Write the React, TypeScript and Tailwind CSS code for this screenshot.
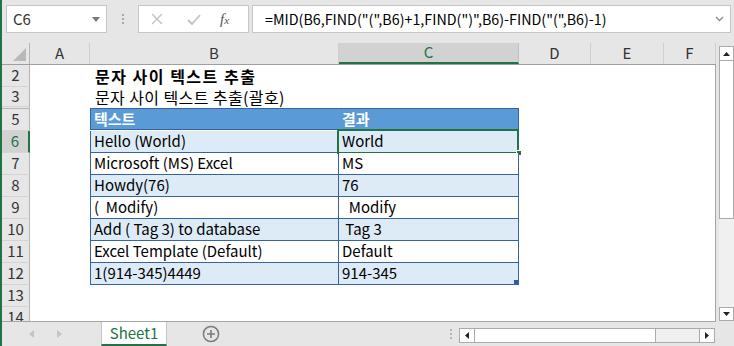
import type { ReactNode } from 'react'

const FONT = { fontFamily: '"Noto Sans CJK KR", "Noto Sans", sans-serif' }

const COLS = [
  { key: 'A', w: 'w-[60px]' },
  { key: 'B', w: 'w-[249px]' },
  { key: 'C', w: 'w-[180px]' },
  { key: 'D', w: 'w-[72px]' },
  { key: 'E', w: 'w-[73px]' },
  { key: 'F', w: 'w-[52px]' },
]

const DATA = [
  ['Hello (World)', 'World'],
  ['Microsoft (MS) Excel', 'MS'],
  ['Howdy(76)', '76'],
  ['(  Modify)', '  Modify'],
  ['Add ( Tag 3) to database', ' Tag 3'],
  ['Excel Template (Default)', 'Default'],
  ['1(914-345)4449', '914-345'],
]

function RowHead({ n, h, active }: { n: string; h: string; active?: boolean }) {
  return (
    <div
      className={`w-[28px] shrink-0 ${h} flex items-center justify-center text-[15px] border-b border-[#d4d4d4] ${
        active ? 'bg-[#d2d2d2] text-[#217346] border-r-2 border-r-[#217346]' : 'bg-[#e6e6e6] text-[#333] border-r border-r-[#b5b5b5]'
      }`}
    >
      {n}
    </div>
  )
}

function Row({ n, h = 'h-[22px]', active, children }: { n: string; h?: string; active?: boolean; children?: ReactNode }) {
  return (
    <div className={`flex shrink-0 ${h}`}>
      <RowHead n={n} h={h} active={active} />
      <div className="w-[60px] shrink-0" />
      {children ?? <div className="flex-1" />}
    </div>
  )
}

function TableRow({ b, c, band, active, last }: { b: string; c: string; band: boolean; active?: boolean; last?: boolean }) {
  const bg = band ? 'bg-[#ddebf7]' : 'bg-white'
  return (
    <>
      <div className={`w-[249px] h-[22px] shrink-0 ${bg} border-l border-r border-b border-[#3763a6] pl-[3px] flex items-center text-[15px] text-black whitespace-pre`}>
        {b}
      </div>
      <div className={`relative w-[180px] h-[22px] shrink-0 ${bg} border-r border-b border-[#3763a6] pl-[3px] flex items-center text-[15px] text-black whitespace-pre`}>
        {c}
        {active && (
          <>
            <div className="absolute -left-[2px] -top-[2px] w-[182px] h-[25px] border-2 border-[#217346]" />
            <div className="absolute -right-[4px] -bottom-[4px] w-[6px] h-[6px] bg-[#217346] border border-white" />
          </>
        )}
        {last && <div className="absolute right-0 bottom-0 w-[4px] h-[4px] bg-[#3555a8]" />}
      </div>
    </>
  )
}

export default function App() {
  return (
    <div className="w-[734px] h-[346px] overflow-hidden bg-[#e6e6e6] border-l-2 border-[#217346] flex flex-col text-[#333]" style={FONT}>
      {/* formula bar */}
      <div className="h-[43px] shrink-0 flex items-start pt-[5px]">
        <div className="ml-[4px] w-[101px] h-[28px] bg-white border border-[#c6c6c6] flex items-center pl-[6px] pr-[6px] text-[15px]">
          <span className="flex-1">C6</span>
          <svg width="8" height="5" viewBox="0 0 8 5"><path d="M0 0h8L4 5z" fill="#7a7a7a" /></svg>
        </div>
        <div className="w-[31px] h-[28px] flex flex-col items-center justify-center gap-[2px]">
          <div className="w-[2px] h-[2px] bg-[#a8a8a8]" />
          <div className="w-[2px] h-[2px] bg-[#a8a8a8]" />
          <div className="w-[2px] h-[2px] bg-[#a8a8a8]" />
        </div>
        <div className="w-[111px] h-[28px] bg-white border border-[#c6c6c6] flex items-center">
          <svg className="ml-[12px]" width="12" height="12" viewBox="0 0 12 12"><path d="M1 1l10 10M11 1L1 11" stroke="#c2c2c2" strokeWidth="1.4" /></svg>
          <svg className="ml-[24px]" width="14" height="11" viewBox="0 0 14 11"><path d="M1 6l4 4 8-9" stroke="#c2c2c2" strokeWidth="1.8" fill="none" /></svg>
          <span className="ml-[19px] text-[15px] italic text-[#555]" style={{ fontFamily: '"Liberation Serif", serif' }}>
            f<span className="text-[11px]">x</span>
          </span>
        </div>
        <div className="ml-[3px] w-[479px] h-[28px] bg-white border border-[#c6c6c6] flex items-center pl-[12px] pr-[6px] text-[14.3px] text-black">
          <span className="flex-1 whitespace-pre">=MID(B6,FIND("(",B6)+1,FIND(")",B6)-FIND("(",B6)-1)</span>
          <svg width="9" height="6" viewBox="0 0 9 6"><path d="M1 1l3.5 3.5L8 1" stroke="#8a8a8a" strokeWidth="1.3" fill="none" /></svg>
        </div>
      </div>

      {/* sheet */}
      <div className="h-[279px] shrink-0 flex">
        <div className="w-[714px] shrink-0 flex flex-col">
          {/* column headers */}
          <div className="h-[22px] shrink-0 flex border-b border-[#9f9f9f]">
            <div className="w-[28px] shrink-0 border-r border-[#b5b5b5] relative">
              <svg className="absolute right-[3px] bottom-[3px]" width="13" height="13" viewBox="0 0 13 13"><path d="M13 0v13H0z" fill="#b8b8b8" /></svg>
            </div>
            {COLS.map((c) => (
              <div
                key={c.key}
                className={`${c.w} shrink-0 flex items-center justify-center text-[15px] ${
                  c.key === 'C'
                    ? 'bg-[#d2d2d2] text-[#217346] border-b-2 border-[#217346] border-r border-r-[#c0c0c0]'
                    : 'border-r border-[#d0d0d0]'
                }`}
              >
                {c.key}
              </div>
            ))}
          </div>
          {/* body */}
          <div className="flex-1 flex flex-col overflow-hidden border-b border-[#a6a6a6] bg-white">
            <div className="flex flex-col bg-white border-r border-[#a6a6a6] h-full">
              <Row n="2">
                <div className="h-[22px] pl-[5px] flex items-center text-[16px] leading-[22px] tracking-[1.5px] font-bold text-black whitespace-nowrap">
                  문자 사이 텍스트 추출
                </div>
              </Row>
              <Row n="3" h="h-[20px]">
                <div className="h-[20px] pl-[5px] flex items-center text-[16px] leading-[20px] tracking-[0.4px] text-black whitespace-nowrap">
                  문자 사이 텍스트 추출(괄호)
                </div>
              </Row>
              <div className="flex shrink-0">
                <div className="w-[28px] h-[2px] bg-[#e6e6e6] border-r border-[#b5b5b5] border-b border-b-[#b5b5b5]" />
              </div>
              <Row n="5">
                <div className="w-[249px] h-[22px] shrink-0 bg-[#5b9bd5] border-l border-r border-t border-b border-[#3763a6] border-r-[#5b9bd5] pl-[3px] flex items-center text-[15px] font-bold text-white -mt-[1px]">
                  텍스트
                </div>
                <div className="w-[180px] h-[22px] shrink-0 bg-[#5b9bd5] border-t border-r border-b border-[#3763a6] pl-[3px] flex items-center text-[15px] font-bold text-white -mt-[1px]">
                  결과
                </div>
              </Row>
              {DATA.map(([b, c], i) => (
                <Row key={i} n={String(i + 6)} active={i === 0}>
                  <TableRow b={b} c={c} band={i % 2 === 0} active={i === 0} last={i === DATA.length - 1} />
                </Row>
              ))}
              <Row n="13" />
              <Row n="14" />
            </div>
          </div>
        </div>
        {/* vertical scrollbar */}
        <div className="ml-[3px] w-[15px] mt-[3px] h-[275px] bg-[#f0f0f0] flex flex-col">
          <div className="h-[15px] bg-white border border-[#ababab] flex items-center justify-center">
            <svg width="7" height="4" viewBox="0 0 7 4"><path d="M0 4h7L3.5 0z" fill="#222" /></svg>
          </div>
          <div className="h-[158px] bg-white border-x border-b border-[#ababab]" />
          <div className="flex-1" />
          <div className="h-[14px] bg-white border border-[#ababab] flex items-center justify-center">
            <svg width="7" height="4" viewBox="0 0 7 4"><path d="M0 0h7L3.5 4z" fill="#222" /></svg>
          </div>
        </div>
      </div>

      {/* tabs */}
      <div className="h-[24px] shrink-0 flex items-stretch">
        <div className="w-[99px] shrink-0 flex items-center">
          <svg className="ml-[27px]" width="5" height="8" viewBox="0 0 5 8"><path d="M5 0v8L0 4z" fill="#c4c4c4" /></svg>
          <svg className="ml-[23px]" width="5" height="8" viewBox="0 0 5 8"><path d="M0 0v8l5-4z" fill="#c4c4c4" /></svg>
        </div>
        <div className="w-[66px] shrink-0 bg-white border-x border-[#c6c6c6] border-b-2 border-b-[#217346] flex items-center justify-center text-[15px] text-[#217346]">
          Sheet1
        </div>
        <div className="w-[86px] shrink-0 flex items-center justify-center pl-[1px]">
          <svg width="18" height="18" viewBox="0 0 18 18">
            <circle cx="9" cy="9" r="7.6" stroke="#7b7b7b" strokeWidth="1.5" fill="none" />
            <path d="M9 5v8M5 9h8" stroke="#7b7b7b" strokeWidth="1.6" />
          </svg>
        </div>
        <div className="flex-1" />
        <div className="w-[16px] flex flex-col items-center justify-center gap-[2px]">
          <div className="w-[2px] h-[2px] bg-[#b4b4b4]" />
          <div className="w-[2px] h-[2px] bg-[#b4b4b4]" />
          <div className="w-[2px] h-[2px] bg-[#b4b4b4]" />
        </div>
        <div className="w-[256px] shrink-0 mt-[6px] mb-[3px] flex border border-[#ababab] bg-[#f0f0f0]">
          <div className="w-[15px] bg-white border-r border-[#ababab] flex items-center justify-center">
            <svg width="4" height="7" viewBox="0 0 4 7"><path d="M4 0v7L0 3.5z" fill="#222" /></svg>
          </div>
          <div className="w-[181px] bg-white border-r border-[#ababab]" />
          <div className="flex-1" />
          <div className="w-[15px] bg-white border-l border-[#ababab] flex items-center justify-center">
            <svg width="4" height="7" viewBox="0 0 4 7"><path d="M0 0v7l4-3.5z" fill="#222" /></svg>
          </div>
        </div>
        <div className="w-[19px] shrink-0" />
      </div>
    </div>
  )
}
